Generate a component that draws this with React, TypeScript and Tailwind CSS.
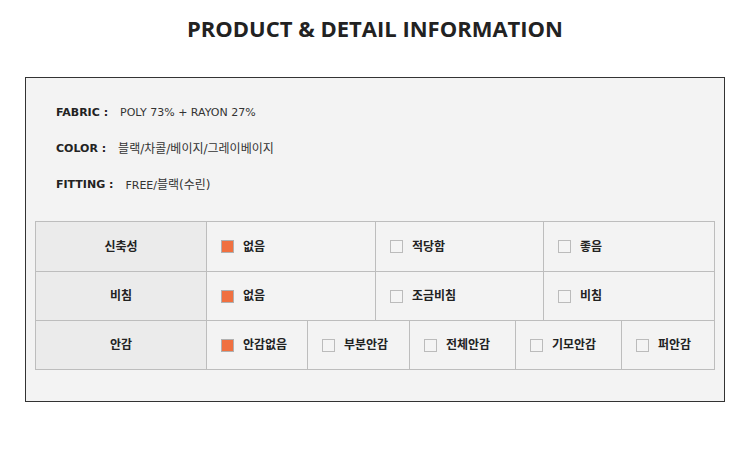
type Opt = { label: string; checked?: boolean; w: string };

const info: { k: string; v: { t: string; ko?: boolean }[] }[] = [
  { k: "FABRIC", v: [{ t: "POLY 73% + RAYON 27%" }] },
  { k: "COLOR", v: [{ t: "블랙/차콜/베이지/그레이베이지", ko: true }] },
  { k: "FITTING", v: [{ t: "FREE/" }, { t: "블랙(수린)", ko: true }] },
];

const rows: { title: string; opts: Opt[] }[] = [
  {
    title: "신축성",
    opts: [
      { label: "없음", checked: true, w: "w-[169px]" },
      { label: "적당함", w: "w-[168px]" },
      { label: "좋음", w: "flex-1" },
    ],
  },
  {
    title: "비침",
    opts: [
      { label: "없음", checked: true, w: "w-[169px]" },
      { label: "조금비침", w: "w-[168px]" },
      { label: "비침", w: "flex-1" },
    ],
  },
  {
    title: "안감",
    opts: [
      { label: "안감없음", checked: true, w: "w-[101px]" },
      { label: "부분안감", w: "w-[102px]" },
      { label: "전체안감", w: "w-[106px]" },
      { label: "기모안감", w: "w-[106px]" },
      { label: "퍼안감", w: "flex-1" },
    ],
  },
];

const Check = ({ on }: { on?: boolean }) => (
  <span
    className={
      on
        ? "w-[13px] h-[13px] border border-[#b0b0b0] bg-[#f07040] shrink-0"
        : "w-[13px] h-[13px] border border-[#bbbbbb] bg-[#f4f4f4] shrink-0"
    }
  />
);

export default function App() {
  return (
    <div className="w-[750px] h-[454px] bg-white text-[#222] [font-family:'DejaVu_Sans','Noto_Sans_CJK_KR',sans-serif]">
      <h1 className="pt-[13px] text-center text-[22px] leading-[30px] font-bold text-[#222] [font-family:'Open_Sans',sans-serif]">
        PRODUCT &amp; DETAIL INFORMATION
      </h1>

      <div className="mx-[25px] mt-[34px] w-[700px] border border-[#333] bg-[#f3f3f3] px-[9px] pt-[17px] pb-[31px]">
        <div className="pl-[21px] mb-[18px]">
          {info.map((i) => (
            <div key={i.k} className="h-[36px] flex items-center text-[11px]">
              <span className="font-bold">{i.k} :</span>
              <span className="ml-[12px] text-[#333]">
                {i.v.map((s) => (
                  <span key={s.t} className={s.ko ? "text-[12px]" : ""}>
                    {s.t}
                  </span>
                ))}
              </span>
            </div>
          ))}
        </div>

        <div className="border border-[#bdbdbd] text-[12px] font-bold">
          {rows.map((r, ri) => (
            <div
              key={r.title}
              className={
                ri === 0
                  ? "flex h-[49px]"
                  : "flex h-[49px] border-t border-[#bdbdbd]"
              }
            >
              <div className="w-[171px] shrink-0 bg-[#ebebeb] flex items-center justify-center border-r border-[#bdbdbd]">
                {r.title}
              </div>
              {r.opts.map((o, oi) => (
                <div
                  key={o.label}
                  className={
                    oi === r.opts.length - 1
                      ? `${o.w} flex items-center gap-[9px] pl-[14px]`
                      : `${o.w} shrink-0 flex items-center gap-[9px] pl-[14px] border-r border-[#bdbdbd]`
                  }
                >
                  <Check on={o.checked} />
                  <span>{o.label}</span>
                </div>
              ))}
            </div>
          ))}
        </div>
      </div>
    </div>
  );
}
